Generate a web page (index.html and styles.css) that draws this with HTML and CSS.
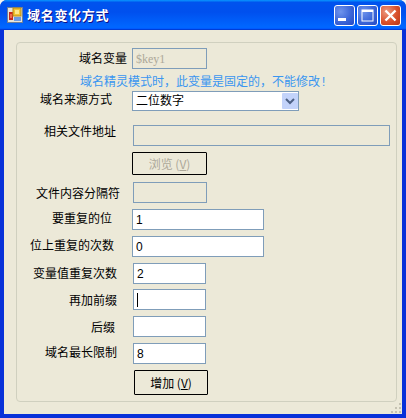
FILE: index.html
```html
<!DOCTYPE html>
<html lang="zh-CN">
<head>
  <meta charset="UTF-8">
  <title>域名变化方式</title>
  <link rel="stylesheet" href="styles.css">
</head>
<body>
  <div class="window">
    <div class="titlebar">
      <svg class="app-icon" width="16" height="16" viewBox="0 0 16 16">
        <rect x="0.5" y="0.5" width="15" height="15" fill="#e8e4d8" stroke="#6f7f98"/>
        <rect x="2" y="5" width="4" height="8" fill="#c8261c"/>
        <rect x="3" y="7" width="2" height="4" fill="#f06a50"/>
        <rect x="6" y="1" width="8" height="8" fill="#f2c230" stroke="#b58a18"/>
        <rect x="8" y="3" width="4" height="4" fill="#fbe68a"/>
        <rect x="7" y="10" width="7" height="4" fill="#6f9be0"/>
      </svg>
      <span class="title">域名变化方式</span>
      <div class="controls">
        <div class="ctl">
          <svg width="21" height="21" viewBox="0 0 21 21"><rect x="4" y="13" width="8" height="3" fill="#fff"/></svg>
        </div>
        <div class="ctl">
          <svg width="21" height="21" viewBox="0 0 21 21"><rect x="5" y="5" width="11" height="11" fill="none" stroke="#fff"/><rect x="5" y="5" width="11" height="2" fill="#fff"/></svg>
        </div>
        <div class="ctl ctl-close">
          <svg width="21" height="21" viewBox="0 0 21 21"><path d="M5.5 5.5l10 10M15.5 5.5l-10 10" stroke="#fff" stroke-width="2.4"/></svg>
        </div>
      </div>
    </div>

    <div class="client">
      <div class="group">
        <div class="form">
          <div class="lbl r6">域名变量</div>
          <div class="field w-75 nudge disabled">$key1</div>

          <div class="hint">域名精灵模式时，此变量是固定的，不能修改!</div>

          <div class="lbl r21 up-2">域名来源方式</div>
          <div class="field combo w-167 nudge">二位数字
            <span class="combo-btn">
              <svg width="10" height="7" viewBox="0 0 10 7"><path d="M1 1l4 4 4-4" fill="none" stroke="#4d6185" stroke-width="2"/></svg>
            </span>
          </div>

          <div class="lbl r17 up-3">相关文件地址</div>
          <div class="field w-257 disabled"></div>

          <div class="btn w-75 nudge is-disabled">浏览 (<u>V</u>)</div>

          <div class="lbl r13 down">文件内容分隔符</div>
          <div class="field w-74 disabled"></div>

          <div class="lbl r21 up-1">要重复的位</div>
          <div class="field w-132 nudge">1</div>

          <div class="lbl r19 up-1">位上重复的次数</div>
          <div class="field w-132 nudge">0</div>

          <div class="lbl r16">变量值重复次数</div>
          <div class="field w-73">2</div>

          <div class="lbl r16 down">再加前缀</div>
          <div class="field w-73"><span class="caret"></span></div>

          <div class="lbl r18 down">后缀</div>
          <div class="field w-73"></div>

          <div class="lbl r16 up-1">域名最长限制</div>
          <div class="field w-73">8</div>

          <div class="btn btn-add">增加 (<u>V</u>)</div>
        </div>
      </div>
      <svg class="grip" width="12" height="12" viewBox="0 0 12 12" fill="#c5c2b2">
        <rect x="9" y="1" width="2" height="2"/>
        <rect x="5" y="5" width="2" height="2"/><rect x="9" y="5" width="2" height="2"/>
        <rect x="1" y="9" width="2" height="2"/><rect x="5" y="9" width="2" height="2"/><rect x="9" y="9" width="2" height="2"/>
      </svg>
    </div>
  </div>
</body>
</html>
```

FILE: styles.css
```css
* {
  box-sizing: border-box;
}

body {
  margin: 0;
  background: #f4f4f0;
  font-family: "Noto Sans CJK SC", "Liberation Sans", sans-serif;
  font-size: 12px;
  color: #000;
}

.window {
  width: 406px;
  height: 418px;
  display: flex;
  flex-direction: column;
  background: #0831d9;
  border-radius: 7px 7px 0 0;
  overflow: hidden;
}

.titlebar {
  height: 30px;
  flex: none;
  display: flex;
  align-items: center;
  padding: 0 5px 0 7px;
  background: linear-gradient(180deg, #0997ff 0, #0053ee 8%, #0050ee 40%, #0066ff 88%, #0066ff 93%, #005bff 95%, #003dd7 96%, #003dd7 100%);
}

.app-icon {
  flex: none;
}

.title {
  margin: -2px 0 0 4px;
  font-size: 13px;
  font-weight: bold;
  letter-spacing: 0.7px;
  color: #fff;
  text-shadow: 1px 1px 0 #0f1089;
}

.controls {
  margin-left: auto;
  display: flex;
  gap: 2px;
}

.ctl {
  width: 21px;
  height: 21px;
  border: 1px solid #fff;
  border-radius: 3px;
  background: radial-gradient(circle at 30% 30%, #6f94ec 0, #3c66d8 55%, #2549c4 100%);
  overflow: hidden;
}

.ctl svg {
  display: block;
  margin: -1px;
}

.ctl-close {
  background: radial-gradient(circle at 30% 30%, #ec9a80 0, #d9512c 55%, #b83516 100%);
}

.client {
  flex: 1;
  position: relative;
  margin: 0 4px 4px;
  padding: 12px 0 0 12px;
  background: #ece9d8;
}

.group {
  width: 381px;
  height: 360px;
  border: 1px solid #d0d0bf;
  border-radius: 4px;
}

.form {
  display: grid;
  grid-template-columns: 116px 1fr;
  grid-template-rows: 26px 17px 34px 27px 30px 27px 27px 27px 26px 27px 27px 27px 25px;
  padding-top: 5px;
  line-height: 14px;
}

.lbl {
  grid-column: 1;
  text-align: right;
  padding-top: 3px;
}

.r6 { padding-right: 6px; }
.r13 { padding-right: 13px; }
.r16 { padding-right: 16px; }
.r17 { padding-right: 17px; }
.r18 { padding-right: 18px; }
.r19 { padding-right: 19px; }
.r21 { padding-right: 21px; }

.up-1 { padding-top: 2px; }
.up-2 { padding-top: 1px; }
.up-3 { padding-top: 0; margin-top: -1px; }
.down { padding-top: 4px; }

.hint {
  grid-column: 1 / 3;
  padding: 2px 0 0 63px;
  color: #3a96f0;
  font-family: "Liberation Mono", "Noto Sans CJK SC", monospace;
}

.field {
  grid-column: 2;
  height: 21px;
  padding: 3px 0 0 3px;
  border: 1px solid #7f9db9;
  background: #fff;
  font-family: "Liberation Sans", "Noto Sans CJK SC", sans-serif;
}

.combo {
  height: 20px;
  padding-top: 1px;
  position: relative;
  font-family: "Noto Sans CJK SC", sans-serif;
}

.combo-btn {
  position: absolute;
  top: 1px;
  right: 0;
  width: 16px;
  height: 16px;
  display: flex;
  align-items: center;
  justify-content: center;
  background: #c3d3fa;
  border-radius: 1px;
}

.disabled {
  background: #ece9d8;
  color: #aca899;
  font-family: "Liberation Serif", serif;
}

.nudge {
  margin-left: -1px;
}

.w-73 { width: 73px; }
.w-74 { width: 74px; }
.w-75 { width: 75px; }
.w-132 { width: 132px; }
.w-167 { width: 167px; }
.w-257 { width: 257px; }

.caret {
  display: block;
  width: 1px;
  height: 14px;
  background: #000;
}

.btn {
  grid-column: 2;
  height: 23px;
  display: flex;
  align-items: center;
  justify-content: center;
  border: 1px solid #000;
  border-radius: 1px;
  background: #ece9d8;
}

.is-disabled {
  color: #aca899;
}

.btn-add {
  width: 74px;
  height: 25px;
  margin-left: 1px;
}

.grip {
  position: absolute;
  right: 0;
  bottom: 0;
}
```
